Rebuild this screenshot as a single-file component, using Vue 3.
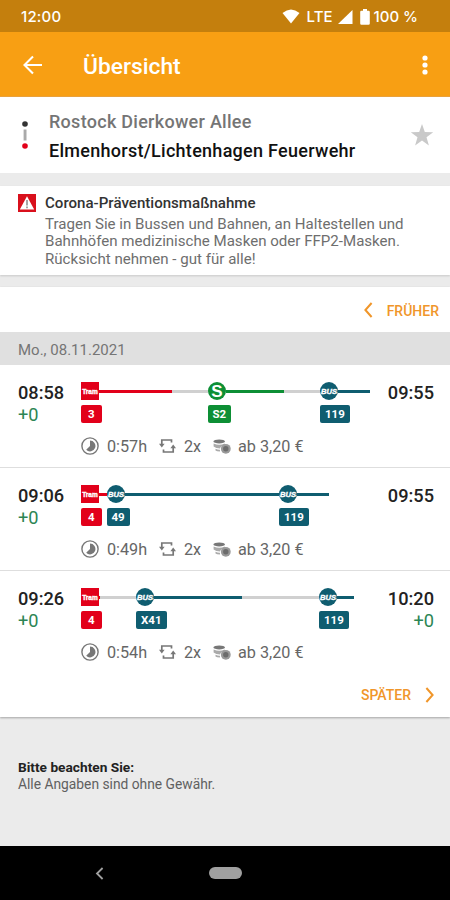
<template>
  <div class="screen">
    <div class="status-bar">
      <span class="clock">12:00</span>
      <div class="status-icons">
        <svg class="wifi" width="18" height="15" viewBox="0 0 18 15">
          <path d="M0.5 4 Q9 -3.2 17.5 4 L9 14.5 Z" fill="#fff" />
        </svg>
        <span class="lte">LTE</span>
        <svg class="signal" width="15" height="14" viewBox="0 0 15 14">
          <path d="M14.5 0 V14 H0 Z" fill="#fff" />
        </svg>
        <svg class="battery" width="10" height="16" viewBox="0 0 10 16">
          <path d="M3 0 H7 V1.7 H8.6 Q9.8 1.7 9.8 3 V14.6 Q9.8 15.8 8.6 15.8 H1.4 Q0.2 15.8 0.2 14.6 V3 Q0.2 1.7 1.4 1.7 H3 Z" fill="#fff" />
        </svg>
        <span class="charge">100 %</span>
      </div>
    </div>

    <header class="app-bar">
      <svg class="back" width="20" height="20" viewBox="0 0 20 20">
        <path d="M19 10 H2 M10 1.5 L1.5 10 L10 18.5" fill="none" stroke="#fff" stroke-width="2.1" />
      </svg>
      <h1>Übersicht</h1>
      <svg class="more" width="6" height="20" viewBox="0 0 6 20">
        <circle cx="3" cy="3" r="2.6" fill="#fff" />
        <circle cx="3" cy="10" r="2.6" fill="#fff" />
        <circle cx="3" cy="17" r="2.6" fill="#fff" />
      </svg>
    </header>

    <section class="route">
      <svg class="route-icon" width="8" height="30" viewBox="0 0 8 30">
        <circle cx="4" cy="4" r="2.8" fill="#333" />
        <rect x="2.6" y="9.5" width="2.9" height="11" fill="#aaa" />
        <circle cx="4" cy="26" r="2.8" fill="#e2001a" />
      </svg>
      <div class="stops">
        <div class="from">Rostock Dierkower Allee</div>
        <div class="to">Elmenhorst/Lichtenhagen Feuerwehr</div>
      </div>
      <svg class="star" width="24" height="24" viewBox="0 0 24 24">
        <path d="M12 1 L14.8 9 L23.2 9.2 L16.5 14.3 L18.9 22.4 L12 17.6 L5.1 22.4 L7.5 14.3 L0.8 9.2 L9.2 9 Z" fill="#c9c9c9" />
      </svg>
    </section>

    <section class="notice">
      <svg class="warning" width="18" height="18" viewBox="0 0 18 18">
        <rect width="18" height="18" fill="#d9101c" />
        <path d="M9 2.3 L16.2 15.6 H1.8 Z" fill="#fff" />
        <path d="M9 6 V11.4 M9 12.6 V14.2" stroke="#888" stroke-width="1.5" />
      </svg>
      <div class="notice-body">
        <div class="notice-title">Corona-Präventionsmaßnahme</div>
        <p>Tragen Sie in Bussen und Bahnen, an Haltestellen und</p>
        <p>Bahnhöfen medizinische Masken oder FFP2-Masken.</p>
        <p>Rücksicht nehmen - gut für alle!</p>
      </div>
    </section>

    <main class="results">
      <div class="pager earlier">
        <svg width="9" height="16" viewBox="0 0 9 16">
          <path d="M7.6 1 L1.4 8 L7.6 15" fill="none" stroke="#f0962a" stroke-width="2" />
        </svg>
        <span>FRÜHER</span>
      </div>
      <div class="date">Mo., 08.11.2021</div>

      <div v-for="trip in trips" :key="trip.departure" class="trip">
        <div class="time">
          <div>{{ trip.departure }}</div>
          <div class="delay">+0</div>
        </div>

        <div class="connection">
          <div class="legs">
            <div
              v-for="(leg, i) in trip.legs"
              :key="i"
              class="leg"
              :class="leg.type"
              :style="{ width: 18 + leg.ride + leg.wait + 'px' }"
            >
              <div class="track">
                <svg class="vehicle" width="18" height="18" viewBox="0 0 18 18">
                  <template v-if="leg.type === 'tram'">
                    <rect width="18" height="18" fill="#e2001a" />
                    <text x="9" y="11.8" class="tram-text" textLength="15.6" lengthAdjust="spacingAndGlyphs">Tram</text>
                  </template>
                  <template v-else-if="leg.type === 'sbahn'">
                    <circle cx="9" cy="9" r="9" fill="#0d8f35" />
                    <text x="9" y="15" class="s-text">S</text>
                  </template>
                  <template v-else>
                    <circle cx="9" cy="9" r="9" fill="#0f5d70" />
                    <text x="9" y="12.2" class="bus-text" textLength="16" lengthAdjust="spacingAndGlyphs">BUS</text>
                  </template>
                </svg>
                <div class="ride" :style="{ width: leg.ride + 'px' }"></div>
                <div class="wait" :style="{ width: leg.wait + 'px' }"></div>
              </div>
              <span class="line">{{ leg.line }}</span>
            </div>
          </div>

          <div class="info">
            <svg class="duration" width="18" height="18" viewBox="0 0 18 18">
              <circle cx="9" cy="9" r="8.1" fill="none" stroke="#777" stroke-width="1.4" />
              <path d="M9 3.6 A5.4 5.4 0 1 1 5.2 12.8 L9 9 Z" fill="#777" />
            </svg>
            <span class="length">{{ trip.duration }}</span>
            <svg class="changes" width="17" height="16" viewBox="0 0 17 16">
              <path d="M2.8 8 V2 H12.5 V4.5 M14.2 8 V14 H4.5 V11.5" fill="none" stroke="#777" stroke-width="1.7" />
              <path d="M0 5.8 H5.6 L2.8 9.4 Z" fill="#777" />
              <path d="M11.4 10.2 H17 L14.2 6.6 Z" fill="#777" />
            </svg>
            <span class="count">2x</span>
            <svg class="coins" width="18" height="17" viewBox="0 0 18 17">
              <ellipse cx="6.2" cy="3.4" rx="5.8" ry="2" fill="#777" />
              <path d="M0.6 5.5 Q6.2 8 11.8 5.5 V7 Q7.8 7.5 7 10.5 Q3 10.5 0.6 8.6 Z" fill="#aaa" />
              <path d="M2.5 10.8 Q5 12 7 11.8 V13.6 Q3.5 13.4 2.5 12.4 Z" fill="#aaa" />
              <circle cx="12.8" cy="10.8" r="4.9" fill="#999" />
              <circle cx="12.8" cy="10.8" r="2.7" fill="#6c6c6c" />
            </svg>
            <span class="price">ab 3,20 €</span>
          </div>
        </div>

        <div class="time arrival">
          <div>{{ trip.arrival }}</div>
          <div v-if="trip.arrivalDelay" class="delay">{{ trip.arrivalDelay }}</div>
        </div>
      </div>

      <div class="pager later">
        <span>SPÄTER</span>
        <svg width="9" height="16" viewBox="0 0 9 16">
          <path d="M1.4 1 L7.6 8 L1.4 15" fill="none" stroke="#f0962a" stroke-width="2" />
        </svg>
      </div>
    </main>

    <footer class="disclaimer">
      <strong>Bitte beachten Sie:</strong>
      <span>Alle Angaben sind ohne Gewähr.</span>
    </footer>

    <nav class="nav-bar">
      <svg class="nav-back" width="9" height="13" viewBox="0 0 9 13">
        <path d="M7.6 1 L2 6.5 L7.6 12" fill="none" stroke="#a0a0a0" stroke-width="1.8" />
      </svg>
      <div class="home"></div>
    </nav>
  </div>
</template>

<script setup>
// ride = coloured part of a leg, wait = grey part until the next vehicle
const trips = [
  {
    departure: '08:58',
    arrival: '09:55',
    duration: '0:57h',
    legs: [
      { type: 'tram', line: '3', ride: 73, wait: 36 },
      { type: 'sbahn', line: 'S2', ride: 58, wait: 36 },
      { type: 'bus', line: '119', ride: 32, wait: 0 },
    ],
  },
  {
    departure: '09:06',
    arrival: '09:55',
    duration: '0:49h',
    legs: [
      { type: 'tram', line: '4', ride: 7.5, wait: 0 },
      { type: 'bus', line: '49', ride: 154.5, wait: 0 },
      { type: 'bus', line: '119', ride: 32, wait: 0 },
    ],
  },
  {
    departure: '09:26',
    arrival: '10:20',
    arrivalDelay: '+0',
    duration: '0:54h',
    legs: [
      { type: 'tram', line: '4', ride: 1, wait: 36 },
      { type: 'bus', line: 'X41', ride: 88, wait: 77 },
      { type: 'bus', line: '119', ride: 17, wait: 0 },
    ],
  },
]
</script>

<style>
body {
  margin: 0;
}
</style>

<style scoped>
.screen {
  display: flex;
  flex-direction: column;
  width: 450px;
  height: 900px;
  overflow: hidden;
  background: #ebebeb;
  font-family: Roboto, "Liberation Sans", sans-serif;
  white-space: nowrap;
}

svg {
  display: block;
  flex: none;
}

.status-bar {
  display: flex;
  align-items: center;
  justify-content: space-between;
  box-sizing: border-box;
  height: 32px;
  padding: 1px 32px 0 21px;
  background: #c47f0d;
  color: #fff;
  font-family: Inter, sans-serif;
  font-size: 15px;
  font-weight: 500;
}

.status-icons {
  display: flex;
  align-items: center;
}

.lte {
  margin: 0 5px 0 7px;
}

.battery {
  margin: 0 4px 0 7px;
}

.clock {
  letter-spacing: 0.2px;
}

.app-bar {
  display: flex;
  align-items: center;
  box-sizing: border-box;
  height: 65px;
  padding: 1px 22px 0 23px;
  background: #f89f13;
  border-bottom: 1px solid #e9a13c;
}

.app-bar h1 {
  flex: 1;
  margin: 3px 0 0 40px;
  color: #fff;
  font-size: 22.8px;
  font-weight: 500;
}

.route {
  display: flex;
  align-items: center;
  box-sizing: border-box;
  height: 76px;
  padding: 0 16px 0 21px;
  background: #fff;
}

.stops {
  flex: 1;
  margin: 2px 0 0 20px;
  font-size: 18px;
  font-weight: 500;
  line-height: 29px;
  letter-spacing: 0.28px;
}

.from {
  color: #757575;
}

.to {
  color: #111;
}

.notice {
  display: flex;
  box-sizing: border-box;
  height: 89px;
  margin-top: 13px;
  padding: 8px 18px 0;
  background: #fff;
  box-shadow: 0 1px 2px rgba(0, 0, 0, 0.15);
}

.notice-body {
  margin: 1px 0 0 9px;
  color: #6e6e6e;
  font-size: 15.08px;
  line-height: 17.5px;
}

.notice-title {
  margin-bottom: 3px;
  color: #333;
  font-weight: 500;
}

.notice p {
  margin: 0;
}

.results {
  display: flex;
  flex-direction: column;
  height: 430px;
  margin-top: 12px;
  background: #fff;
  box-shadow: 0 1px 2px rgba(0, 0, 0, 0.3);
}

.pager {
  display: flex;
  align-items: center;
  justify-content: flex-end;
  box-sizing: border-box;
  height: 45px;
  color: #f0962a;
  font-size: 14px;
  font-weight: 500;
}

.earlier {
  gap: 14px;
  padding: 1px 11px 0 0;
}

.earlier span {
  margin-top: 1px;
}

.later {
  gap: 14px;
  padding-right: 16px;
}

.date {
  height: 33px;
  padding-left: 18px;
  background: #e0e0e0;
  color: #757575;
  font-size: 15px;
  line-height: 36px;
}

.trip {
  display: flex;
  flex: none;
  box-sizing: border-box;
  height: 103px;
  padding: 17px 16px 0 18px;
  border-bottom: 1px solid #dedede;
}

.trip:nth-last-child(2) {
  height: 101px;
  border-bottom: none;
}

.time {
  width: 63px;
  color: #222;
  font-size: 18.2px;
  font-weight: 500;
  line-height: 22px;
}

.arrival {
  width: 64px;
  text-align: right;
}

.delay {
  color: #2c8554;
  font-weight: 400;
}

.connection {
  flex: 1;
}

.legs {
  display: flex;
}

.leg {
  flex: none;
}

.track {
  display: flex;
  align-items: center;
}

.ride {
  height: 3px;
  background: #0f5d70;
}

.wait {
  height: 3px;
  background: #d0d0d0;
}

.line {
  display: inline-block;
  box-sizing: border-box;
  height: 18px;
  margin-top: 5px;
  padding: 0 5px;
  border-radius: 2px;
  background: #0f5d70;
  color: #fff;
  font-size: 11.5px;
  font-weight: 700;
  line-height: 19px;
  vertical-align: top;
}

.tram .ride,
.tram .line {
  background: #e2001a;
}

.tram .line {
  padding: 0 7px;
}

.sbahn .ride,
.sbahn .line {
  background: #0d8f35;
}

.sbahn .line {
  padding: 0 4.5px;
}

.tram-text,
.bus-text {
  fill: #fff;
  stroke: #fff;
  stroke-width: 0.4px;
  font-family: "Liberation Sans", sans-serif;
  font-size: 7.5px;
  font-weight: 700;
  text-anchor: middle;
}

.bus-text {
  font-size: 8px;
  font-style: italic;
}

.s-text {
  fill: #fff;
  font-family: "Liberation Sans", sans-serif;
  font-size: 17px;
  font-weight: 700;
  text-anchor: middle;
}

.info {
  display: flex;
  align-items: center;
  height: 20px;
  margin-top: 13px;
  color: #666;
  font-size: 16.2px;
}

.info span {
  padding-top: 1px;
}

.length {
  width: 45px;
  margin-left: 8px;
}

.changes {
  margin-left: 7px;
}

.count {
  width: 18px;
  margin-left: 8px;
}

.coins {
  margin-left: 11px;
}

.price {
  margin-left: 7px;
}

.disclaimer {
  display: flex;
  flex: 1;
  flex-direction: column;
  padding: 42px 18px 0;
  color: #606060;
  font-size: 13.8px;
  line-height: 17px;
}

.disclaimer strong {
  color: #222;
  font-size: 13.7px;
}

.nav-bar {
  display: flex;
  align-items: center;
  box-sizing: border-box;
  height: 54px;
  padding-left: 95px;
  background: #000;
}

.home {
  width: 33px;
  height: 12px;
  margin-left: 105px;
  border-radius: 6px;
  background: #a0a0a0;
}
</style>
